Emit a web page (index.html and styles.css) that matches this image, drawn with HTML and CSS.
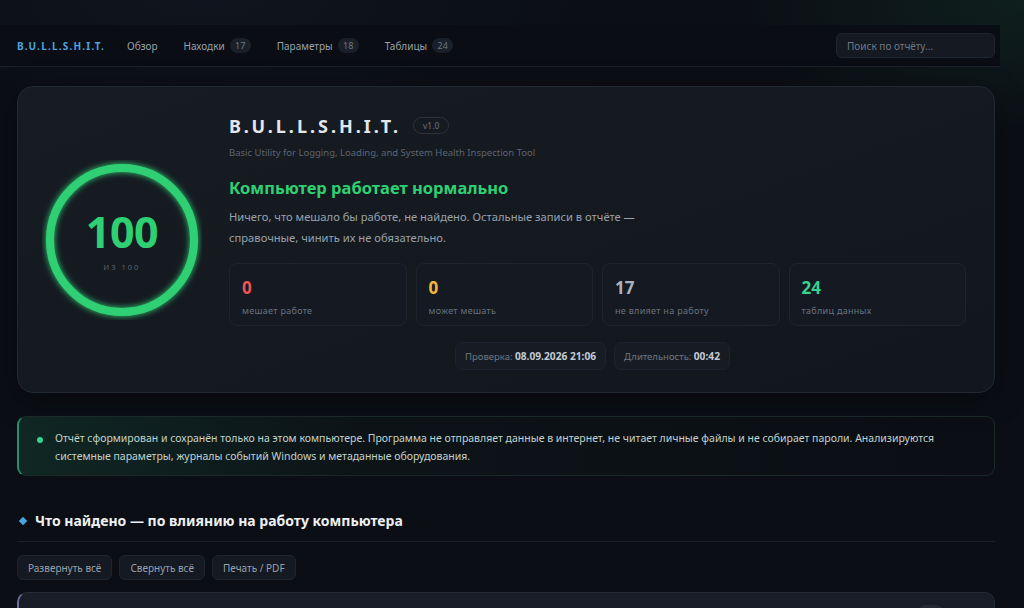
FILE: index.html
```html
<!DOCTYPE html>
<html lang="ru">
<head>
  <meta charset="UTF-8">
  <meta name="viewport" content="width=device-width, initial-scale=1.0">
  <title>B.U.L.L.S.H.I.T. — отчёт</title>
  <link rel="stylesheet" href="styles.css">
</head>
<body>
  <div class="page">
    <nav class="topnav">
      <div class="brand">B.U.L.L.S.H.I.T.</div>
      <a class="nav-link">Обзор</a>
      <a class="nav-link">Находки <span class="count">17</span></a>
      <a class="nav-link">Параметры <span class="count">18</span></a>
      <a class="nav-link">Таблицы <span class="count">24</span></a>
      <input class="search" type="text" placeholder="Поиск по отчёту...">
    </nav>

    <main class="content">
      <section class="hero">
        <div class="score">
          <svg class="ring" width="160" height="160" viewBox="0 0 160 160">
            <defs>
              <filter id="glow" x="-10%" y="-10%" width="120%" height="120%">
                <feGaussianBlur stdDeviation="3" result="b"/>
                <feMerge>
                  <feMergeNode in="b"/>
                  <feMergeNode in="SourceGraphic"/>
                </feMerge>
              </filter>
            </defs>
            <circle cx="80" cy="80" r="72" fill="none" stroke="#2fd073" stroke-width="8" filter="url(#glow)"/>
          </svg>
          <div class="score-text">
            <div class="score-num">100</div>
            <div class="score-of">ИЗ 100</div>
          </div>
        </div>

        <div class="hero-body">
          <div class="hero-title">
            <h1>B.U.L.L.S.H.I.T.</h1>
            <span class="version">v1.0</span>
          </div>
          <div class="subtitle">Basic Utility for Logging, Loading, and System Health Inspection Tool</div>
          <h2 class="verdict">Компьютер работает нормально</h2>
          <p class="desc">Ничего, что мешало бы работе, не найдено. Остальные записи в отчёте — справочные, чинить их не обязательно.</p>

          <div class="stats">
            <div class="stat">
              <div class="stat-num red">0</div>
              <div class="stat-label">мешает работе</div>
            </div>
            <div class="stat">
              <div class="stat-num amber">0</div>
              <div class="stat-label">может мешать</div>
            </div>
            <div class="stat">
              <div class="stat-num grey">17</div>
              <div class="stat-label">не влияет на работу</div>
            </div>
            <div class="stat">
              <div class="stat-num green">24</div>
              <div class="stat-label">таблиц данных</div>
            </div>
          </div>

          <div class="meta">
            <span class="meta-pill">Проверка: <b>08.09.2026 21:06</b></span>
            <span class="meta-pill">Длительность: <b>00:42</b></span>
          </div>
        </div>
      </section>

      <div class="notice">
        <span class="dot"></span>
        <p>Отчёт сформирован и сохранён только на этом компьютере. Программа не отправляет данные в интернет, не читает личные файлы и не собирает пароли. Анализируются системные параметры, журналы событий Windows и метаданные оборудования.</p>
      </div>

      <h3 class="section-title">Что найдено — по влиянию на работу компьютера</h3>

      <div class="toolbar">
        <button class="btn">Развернуть всё</button>
        <button class="btn">Свернуть всё</button>
        <button class="btn">Печать / PDF</button>
      </div>

      <div class="group">
        <div class="group-head">
          <span class="group-tag"></span>
        </div>
      </div>
    </main>
  </div>
</body>
</html>
```

FILE: styles.css
```css
:root {
  --bg: #0b0e14;
  --text: #e6e9ee;
  --blue: #4aa3df;
  --green: #2fd073;
}

* {
  box-sizing: border-box;
}

body {
  margin: 0;
  padding-top: 25px;
  background-color: var(--bg);
  background-image:
    radial-gradient(ellipse 300px 140px at 100% 0%, rgba(30, 110, 70, 0.18), transparent),
    radial-gradient(ellipse 400px 120px at 20% 0%, rgba(40, 60, 90, 0.15), transparent);
  color: var(--text);
  font-family: "Noto Sans", "Open Sans", sans-serif;
  overflow: hidden;
}

.page {
  width: 1000px;
}

.topnav {
  display: flex;
  align-items: center;
  height: 42px;
  padding: 0 5px 0 17px;
  background: #0a0d13;
  border-bottom: 1px solid #1c2129;
}

.brand {
  font-size: 10px;
  font-weight: 700;
  letter-spacing: 1.2px;
  color: var(--blue);
  margin-right: 22px;
}

.nav-link {
  display: flex;
  align-items: center;
  gap: 5px;
  font-size: 10px;
  color: #98a1ac;
  margin-right: 26px;
}

.count {
  display: inline-block;
  min-width: 21px;
  padding: 1px 5px;
  border-radius: 8px;
  background: #1a2029;
  color: #6e7782;
  font-size: 9px;
  text-align: center;
}

.search {
  margin-left: auto;
  width: 159px;
  height: 25px;
  padding: 0 10px;
  border: 1px solid #20262f;
  border-radius: 6px;
  background: #141922;
  color: var(--text);
  font-family: inherit;
  font-size: 10px;
}

.search::placeholder {
  color: #6f7883;
}

.content {
  padding: 19px 5px 0 17px;
}

.hero {
  display: flex;
  align-items: center;
  gap: 27px;
  height: 307px;
  padding: 0 28px 0 26px;
  border: 1px solid #222932;
  border-radius: 16px;
  background: linear-gradient(160deg, #171c23 0%, #12161d 100%);
  box-shadow: 0 8px 30px rgba(0, 0, 0, 0.35);
}

.score {
  position: relative;
  flex: 0 0 160px;
  height: 160px;
  margin-left: -2px;
}

.ring {
  display: block;
}

.score-text {
  position: absolute;
  inset: 0;
  display: flex;
  flex-direction: column;
  align-items: center;
  justify-content: center;
}

.score-num {
  font-size: 43px;
  font-weight: 700;
  line-height: 1;
  color: var(--green);
  letter-spacing: -0.5px;
  margin-top: 2px;
}

.score-of {
  margin-top: 9px;
  font-size: 7.5px;
  letter-spacing: 2px;
  color: #5a626d;
}

.hero-body {
  flex: 1;
  padding-top: 4px;
}

.hero-title {
  display: flex;
  align-items: center;
  gap: 12px;
}

.hero-title h1 {
  margin: 0;
  font-size: 18px;
  font-weight: 700;
  letter-spacing: 3px;
  color: #e3e7ec;
}

.version {
  padding: 2px 9px;
  border: 1px solid #2d333c;
  border-radius: 10px;
  font-size: 8.5px;
  color: #6b737d;
}

.subtitle {
  margin-top: 8px;
  font-size: 9.5px;
  color: #5c6570;
}

.verdict {
  margin: 17px 0 0;
  font-size: 16.5px;
  font-weight: 700;
  color: var(--green);
}

.desc {
  margin: 7px 0 0;
  max-width: 420px;
  font-size: 11.2px;
  line-height: 21px;
  color: #99a2ac;
}

.stats {
  display: grid;
  grid-template-columns: repeat(4, 1fr);
  gap: 9px;
  margin-top: 15px;
}

.stat {
  height: 63px;
  padding: 12px 12px 0;
  border: 1px solid #1e242d;
  border-radius: 8px;
  background: #151a22;
}

.stat-num {
  font-size: 17px;
  font-weight: 700;
  line-height: 24px;
}

.stat-label {
  margin-top: 4px;
  font-size: 9px;
  letter-spacing: 0.3px;
  color: #68717b;
}

.red { color: #f05454; }
.amber { color: #f5b73b; }
.grey { color: #aab2bd; }
.green { color: #35d38f; }

.meta {
  display: flex;
  justify-content: center;
  gap: 8px;
  margin-top: 16px;
  padding-right: 10px;
}

.meta-pill {
  padding: 6px 9px;
  border: 1px solid #1d232c;
  border-radius: 7px;
  background: #171c24;
  font-size: 9.5px;
  color: #6f7883;
}

.meta-pill b {
  font-size: 10.2px;
  color: #c4cad2;
}

.notice {
  display: flex;
  align-items: flex-start;
  gap: 12px;
  margin-top: 23px;
  padding: 12px 16px 10px 18px;
  border: 1px solid #1c2a27;
  border-left: 2px solid #2a8f66;
  border-radius: 9px;
  background: linear-gradient(90deg, rgba(22, 70, 55, 0.45) 0%, rgba(16, 30, 30, 0.35) 35%, rgba(12, 15, 20, 0.2) 100%);
}

.dot {
  flex: 0 0 6px;
  height: 6px;
  margin-top: 8px;
  border-radius: 50%;
  background: #35d38f;
}

.notice p {
  margin: 0;
  font-size: 10.5px;
  line-height: 18px;
  color: #c3d3cc;
}

.section-title {
  display: flex;
  align-items: center;
  gap: 9px;
  margin: 35px 0 0;
  padding: 0 0 11px 3px;
  border-bottom: 1px solid #1c2129;
  font-size: 14px;
  font-weight: 700;
  color: #eef0f3;
}

.section-title::before {
  content: '';
  width: 6px;
  height: 6px;
  background: var(--blue);
  transform: rotate(45deg);
}

.toolbar {
  display: flex;
  gap: 7px;
  margin-top: 13px;
}

.btn {
  height: 25px;
  padding: 0 10px;
  border: 1px solid #1f252e;
  border-radius: 6px;
  background: #141922;
  color: #98a1ac;
  font-family: inherit;
  font-size: 10px;
}

.group {
  margin-top: 12px;
  border: 1px solid #232a35;
  border-left: 2px solid #6c6f9e;
  border-radius: 10px;
  background: #181d27;
}

.group-head {
  display: flex;
  justify-content: flex-end;
  height: 40px;
  padding: 12px 50px 0 16px;
}

.group-tag {
  width: 26px;
  height: 16px;
  border-radius: 8px;
  background: #242a35;
}
```
